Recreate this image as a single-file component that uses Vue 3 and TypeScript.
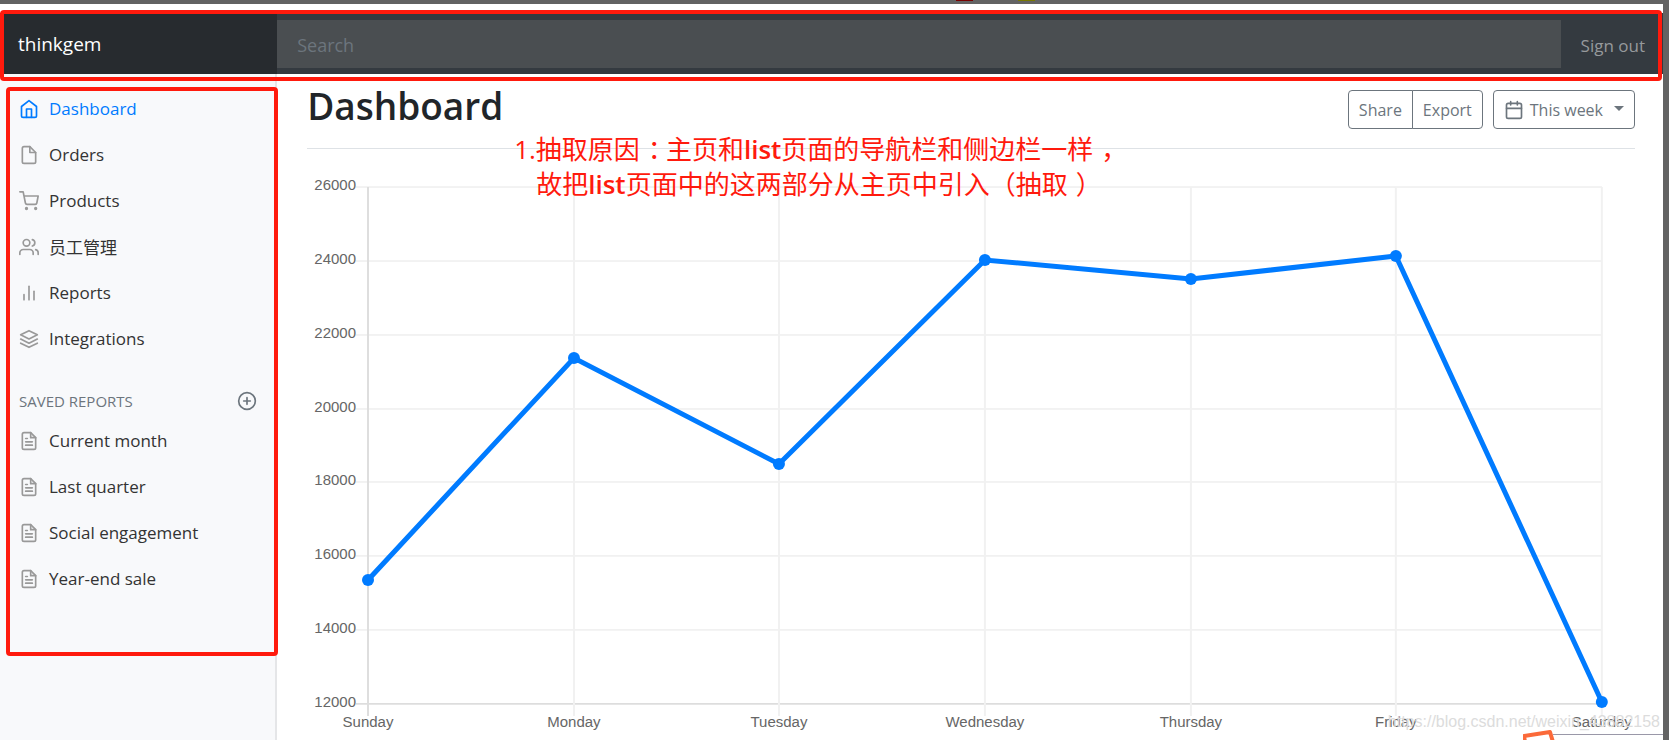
<script setup lang="ts">
interface NavItem {
  label: string
  icon: string
}

const icons: Record<string, string> = {
  home: '<path d="M3 9l9-7 9 7v11a2 2 0 0 1-2 2H5a2 2 0 0 1-2-2z"/><path d="M9 22V12h6v10"/>',
  file: '<path d="M13 2H6a2 2 0 0 0-2 2v16a2 2 0 0 0 2 2h12a2 2 0 0 0 2-2V9z"/><path d="M13 2v7h7"/>',
  cart: '<circle cx="9" cy="21" r="1"/><circle cx="20" cy="21" r="1"/><path d="M1 1h4l2.68 13.39a2 2 0 0 0 2 1.61h9.72a2 2 0 0 0 2-1.61L23 6H6"/>',
  users: '<path d="M17 21v-2a4 4 0 0 0-4-4H5a4 4 0 0 0-4 4v2"/><circle cx="9" cy="7" r="4"/><path d="M23 21v-2a4 4 0 0 0-3-3.87"/><path d="M16 3.13a4 4 0 0 1 0 7.75"/>',
  bars: '<path d="M18 20V10"/><path d="M12 20V4"/><path d="M6 20v-6"/>',
  layers: '<path d="M12 2L2 7l10 5 10-5-10-5z"/><path d="M2 17l10 5 10-5"/><path d="M2 12l10 5 10-5"/>',
  text: '<path d="M14 2H6a2 2 0 0 0-2 2v16a2 2 0 0 0 2 2h12a2 2 0 0 0 2-2V8z"/><path d="M14 2v6h6"/><path d="M16 13H8"/><path d="M16 17H8"/><path d="M10 9H8"/>',
}

const mainItems: NavItem[] = [
  { label: 'Dashboard', icon: 'home' },
  { label: 'Orders', icon: 'file' },
  { label: 'Products', icon: 'cart' },
  { label: '员工管理', icon: 'users' },
  { label: 'Reports', icon: 'bars' },
  { label: 'Integrations', icon: 'layers' },
]
const savedItems: NavItem[] = ['Current month', 'Last quarter', 'Social engagement', 'Year-end sale'].map(
  (label) => ({ label, icon: 'text' }),
)

const days = ['Sunday', 'Monday', 'Tuesday', 'Wednesday', 'Thursday', 'Friday', 'Saturday']
const values = [15339, 21345, 18483, 24003, 23489, 24092, 12034]
const ticks = [26000, 24000, 22000, 20000, 18000, 16000, 14000, 12000]

const left = 61
const right = 1295
const top = 17
const bottom = 534
const xAt = (i: number) => Math.round(left + ((right - left) * i) / (days.length - 1))
const yAt = (v: number) => Math.round(bottom - ((bottom - top) * (v - 12000)) / 14000)
const line = values.map((v, i) => `${xAt(i)},${yAt(v) - 1}`).join(' ')
</script>

<template>
  <div class="page">
    <div class="strip"><i class="mark dark-red"></i><i class="mark olive"></i></div>
    <div class="body">
      <header class="navbar">
        <a class="brand" href="#">thinkgem</a>
        <input class="search" type="text" placeholder="Search" aria-label="Search" />
        <a class="signout" href="#">Sign out</a>
        <div class="frame nav-frame"></div>
      </header>
      <div class="columns">
        <nav class="sidebar">
          <ul>
            <li v-for="(item, i) in mainItems" :key="item.label">
              <a href="#" class="link" :class="{ active: i === 0 }">
                <svg class="icon" viewBox="0 0 24 24" v-html="icons[item.icon]"></svg>{{ item.label }}
              </a>
            </li>
          </ul>
          <h6 class="saved">
            <span>SAVED REPORTS</span>
            <a href="#" aria-label="Add report">
              <svg class="icon" viewBox="0 0 24 24"><circle cx="12" cy="12" r="10" /><path d="M12 8v8M8 12h8" /></svg>
            </a>
          </h6>
          <ul>
            <li v-for="item in savedItems" :key="item.label">
              <a href="#" class="link">
                <svg class="icon" viewBox="0 0 24 24" v-html="icons[item.icon]"></svg>{{ item.label }}
              </a>
            </li>
          </ul>
          <div class="frame side-frame"></div>
        </nav>
        <main class="content">
          <div class="heading">
            <h1>Dashboard</h1>
            <div class="tools">
              <div class="group">
                <button type="button">Share</button>
                <button type="button">Export</button>
              </div>
              <button type="button" class="week">
                <svg class="icon" viewBox="0 0 24 24"><rect x="3" y="4" width="18" height="18" rx="2" /><path d="M16 2v4M8 2v4M3 10h18" /></svg>
                This week
                <span class="caret"></span>
              </button>
            </div>
          </div>
          <svg class="chart" viewBox="0 0 1328 580">
            <g v-for="t in ticks" :key="t">
              <line :x1="left - 12" :x2="right" :y1="yAt(t)" :y2="yAt(t)" :class="t === 12000 ? 'base' : 'grid'" />
              <text :x="left - 12" :y="yAt(t) + 3" text-anchor="end">{{ t }}</text>
            </g>
            <g v-for="(d, i) in days" :key="d">
              <line :x1="xAt(i)" :x2="xAt(i)" :y1="top" :y2="bottom + 12" :class="i === 0 ? 'axis' : 'vgrid'" />
              <text :x="xAt(i)" :y="bottom + 23" text-anchor="middle">{{ d }}</text>
            </g>
            <polyline :points="line" class="series" />
            <circle v-for="(v, i) in values" :key="i" :cx="xAt(i)" :cy="yAt(v) - 1" r="6" class="dot" />
          </svg>
          <p class="note">
            1.抽取原因<i>：</i>主页和<b>list</b>页面的导航栏和侧边栏一样<i>，</i><br /><span>故把<b>list</b>页面中的这两部分从主页中引入（抽取<i>）</i></span>
          </p>
        </main>
      </div>
    </div>
    <div class="watermark">https://blog.csdn.net/weixin_43882158</div>
    <svg class="badge" viewBox="0 0 146 10">
      <path d="M30 5H140V10H30z" fill="#fff" />
      <path d="M30 4.500H140" stroke="#9a98a8" />
      <path d="M2 12L1 6L27 2L30 12" fill="none" stroke="#fb6a3a" stroke-width="4" stroke-linejoin="round" />
    </svg>
  </div>
</template>

<style>
html,
body {
  margin: 0;
  overflow: hidden;
}
</style>

<style scoped>
* {
  box-sizing: border-box;
}
.page {
  position: relative;
  height: 100vh;
  overflow: hidden;
  display: flex;
  flex-direction: column;
  background: #636363;
  color: #212529;
  font-family: "Open Sans", "Noto Sans CJK SC", sans-serif;
  font-size: 16px;
}
a {
  color: inherit;
  text-decoration: none;
}
.strip {
  position: relative;
  flex: none;
  height: 4px;
}
.mark {
  position: absolute;
  top: 0;
  width: 17px;
  height: 1px;
}
.dark-red {
  left: 956px;
  background: #700;
}
.olive {
  left: 1018px;
  background: #770;
}
.body {
  flex: 1;
  margin-right: 6px;
  padding-top: 9px;
  background: #fff;
  display: flex;
  flex-direction: column;
}
.navbar {
  position: relative;
  z-index: 1;
  flex: none;
  display: flex;
  align-items: center;
  height: 61px;
  background: #343a40;
}
.brand {
  flex: none;
  width: 16.6667%;
  height: 100%;
  padding-left: 18px;
  line-height: 62px;
  background: #272b2f;
  color: #fff;
  font-size: 19px;
}
.search {
  flex: 1;
  height: 48px;
  padding: 2px 20px 0;
  border: 0;
  background: #4a4e51;
  color: #fff;
  font: inherit;
  font-size: 18px;
}
.search::placeholder {
  color: #6c757d;
  opacity: 1;
}
.signout {
  padding: 4px 18px 0 20px;
  color: #96999c;
  font-size: 17px;
}
.frame {
  position: absolute;
  border: 4px solid #ff1a0d;
  border-radius: 4px;
  pointer-events: none;
}
.nav-frame {
  inset: -3px 1px -7px 0;
}
.columns {
  flex: 1;
  display: flex;
}
.sidebar {
  position: relative;
  flex: none;
  width: 16.6667%;
  padding-top: 11px;
  background: #f8f9fb;
  border-right: 2px solid #e5e6e8;
}
.side-frame {
  inset: 13px -3px auto 6px;
  height: 569px;
}
ul {
  margin: 0;
  padding: 0;
  list-style: none;
}
.link {
  display: flex;
  align-items: center;
  gap: 10px;
  height: 46px;
  padding-left: 19px;
  color: #333;
  font-size: 17px;
}
.icon {
  flex: none;
  width: 20px;
  height: 20px;
  fill: none;
  stroke: currentColor;
  stroke-width: 2;
  stroke-linecap: round;
  stroke-linejoin: round;
}
.link .icon {
  margin-top: 2px;
  stroke: #999;
}
.link.active,
.link.active .icon {
  color: #007bff;
  stroke: currentColor;
}
.saved {
  display: flex;
  align-items: center;
  justify-content: space-between;
  height: 32px;
  margin: 24px 18px 0 19px;
  color: #6c757d;
  font-size: 15px;
  font-weight: 400;
}
.saved .icon {
  display: block;
}
.content {
  position: relative;
  flex: 1;
  min-width: 0;
  padding: 0 28px 0 30px;
}
.heading {
  display: flex;
  align-items: flex-start;
  justify-content: space-between;
  height: 75px;
  padding-top: 8px;
  border-bottom: 1px solid #dee2e6;
}
h1 {
  margin: 0;
  font-size: 37px;
  line-height: 48px;
  font-weight: 600;
}
.tools {
  display: flex;
  gap: 10px;
  padding-top: 8px;
}
.group {
  display: flex;
}
button {
  display: flex;
  align-items: center;
  height: 39px;
  padding: 0 10px;
  border: 1px solid #6c757d;
  border-radius: 4px;
  background: #fff;
  color: #6c757d;
  font: inherit;
  font-size: 16px;
}
.group button:first-child {
  border-radius: 4px 0 0 4px;
}
.group button:last-child {
  margin-left: -1px;
  border-radius: 0 4px 4px 0;
}
.week {
  gap: 6px;
}
.caret {
  margin: 0 0 2px 5px;
  border: 5px solid transparent;
  border-top-color: currentColor;
  border-bottom: 0;
}
.chart {
  display: block;
  width: 100%;
  margin-top: 21px;
}
.chart text {
  fill: #666;
  font-family: "Liberation Sans", Arial, sans-serif;
  font-size: 15px;
}
.grid {
  stroke: #e6e6e6;
}
.vgrid {
  stroke: #f1f1f1;
  stroke-width: 2;
}
.axis {
  stroke: #dedede;
  stroke-width: 2;
}
.base {
  stroke: #c4c4c4;
}
.series {
  fill: none;
  stroke: #007bff;
  stroke-width: 5;
}
.dot {
  fill: #007bff;
}
.note {
  position: absolute;
  top: 58px;
  left: 237px;
  margin: 0;
  color: #ff1a0d;
  font-size: 26px;
  line-height: 35px;
  white-space: nowrap;
}
.note b {
  font-weight: 600;
}
.note i {
  margin: 0 -8px 0 8px;
  font-style: normal;
}
.note span {
  margin-left: 22px;
}
.watermark {
  position: absolute;
  right: 9px;
  bottom: 9px;
  color: #dcdcdc;
  font-family: "Liberation Sans", Arial, sans-serif;
  font-size: 16px;
}
.badge {
  position: absolute;
  right: 0;
  bottom: 0;
  width: 146px;
  height: 10px;
}
</style>
